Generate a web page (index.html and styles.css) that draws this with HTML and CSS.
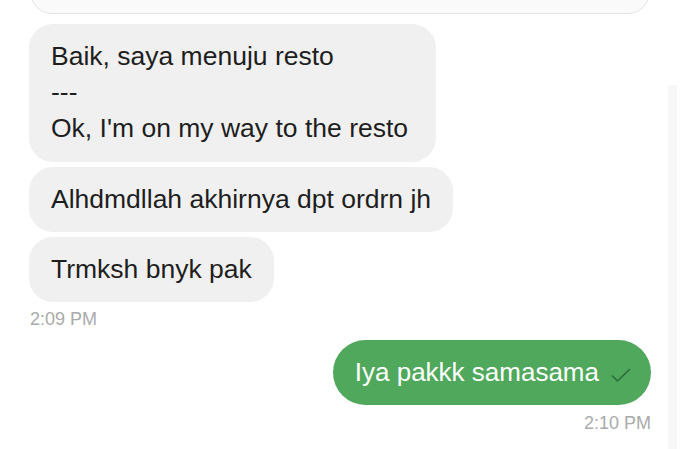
FILE: index.html
```html
<!DOCTYPE html>
<html>

<head>
    <title>Chat</title>
    <link rel="stylesheet" href="styles.css">
</head>

<body>
    <div id="chat">
        <div class="inputBox"></div>
        <div class="group in">
            <div class="bubble">Baik, saya menuju resto<br>---<br>Ok, I'm on my way to the resto</div>
            <div class="bubble">Alhdmdllah akhirnya dpt ordrn jh</div>
            <div class="bubble">Trmksh bnyk pak</div>
            <div class="time">2:09 PM</div>
        </div>
        <div class="group out">
            <div class="bubble">Iya pakkk samasama
                <svg class="tick" width="22" height="16" viewBox="0 0 22 16">
                    <path d="M2 8.5 L7.5 14 L20 2" fill="none" stroke="#2f6b3a" stroke-width="1.6" />
                </svg>
            </div>
            <div class="time">2:10 PM</div>
        </div>
    </div>
    <div class="scroll"></div>
</body>

</html>
```
FILE: styles.css
```css
* {
    box-sizing: border-box;
    font-family: "Liberation Sans", Arial, sans-serif;
}

body {
    margin: 0;
    background: #fff;
    overflow: hidden;
}

#chat {
    padding: 0 29px;
}

.inputBox {
    margin: -30px 1px 0;
    height: 44px;
    border: 1px solid #e4e4e4;
    border-radius: 22px;
    background: #fafafa;
}

.group {
    display: flex;
    flex-direction: column;
    gap: 5px;
    margin-top: 10px;
}

.in {
    align-items: flex-start;
}

.out {
    align-items: flex-end;
    margin-top: 10px;
}

.bubble {
    font-size: 26.5px;
    line-height: 36px;
    padding: 14px 22px 15px;
    border-radius: 24px;
    background: #f0f0f0;
    color: #1e1e1e;
}

.in .bubble:first-child {
    padding-bottom: 16px;
    padding-right: 28px;
}

.out .bubble {
    background: #4fa85b;
    color: #fff;
    font-size: 26px;
    border-radius: 33px;
    padding: 14px 19px 15px 22px;
    display: flex;
    align-items: center;
    gap: 11px;
}

.tick {
    margin-top: 6px;
}

.time {
    font-size: 18px;
    color: #aaa;
    margin-top: 2px;
    padding-left: 1px;
}

.out .time {
    margin-top: 3px;
}

.scroll {
    position: absolute;
    right: 3px;
    top: 85px;
    bottom: 0;
    width: 9px;
    background: #f7f7f7;
}
```
